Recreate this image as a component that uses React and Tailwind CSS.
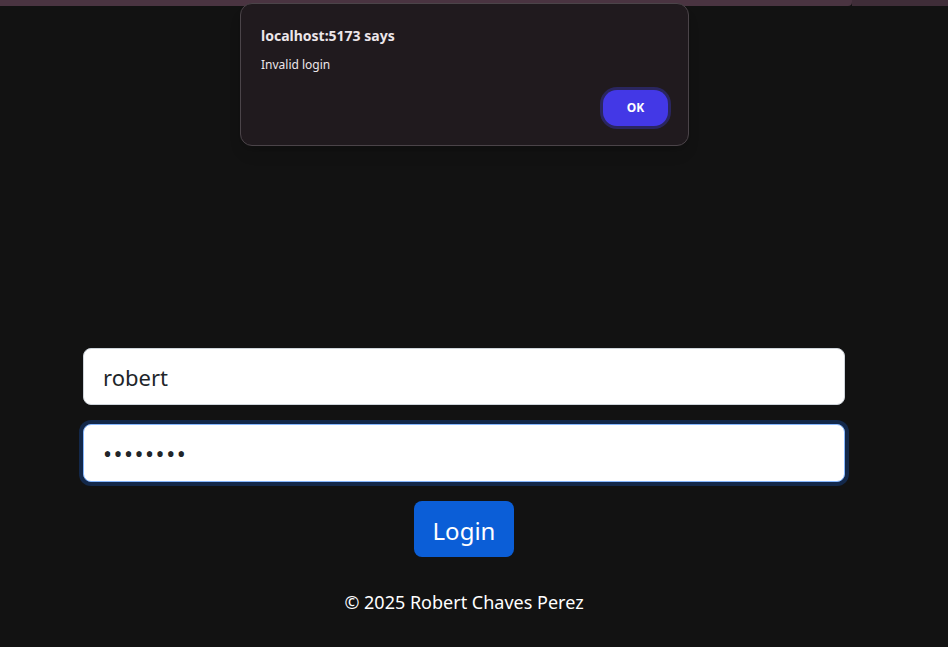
import { useState } from "react";

const App = () => {
  const [user, setUser] = useState("robert");
  const [pass, setPass] = useState("robert12");
  return (
    <div
      className="relative min-h-[647px] w-full bg-[#121212] text-white"
      style={{ fontFamily: '"Noto Sans", "Open Sans", sans-serif' }}
    >
      <div className="flex h-[6px] w-full">
        <div className="h-full w-[852px] rounded-br-sm bg-[#4a3441]" />
        <div className="h-full flex-1 bg-[#3f2d38]" />
      </div>

      <div className="flex flex-col items-center pt-[342px]">
        <div className="flex w-[762px] -translate-x-[10px] flex-col items-center">
          <input
            value={user}
            onChange={(e) => setUser(e.target.value)}
            className="h-[57px] w-full rounded-lg border border-[#ced4da] bg-white px-[19px] text-[22px] text-[#212529] outline-none"
          />
          <input
            type="password"
            value={pass}
            onChange={(e) => setPass(e.target.value)}
            className="mt-[19px] h-[58px] w-full rounded-lg border border-[#86b7fe] bg-white px-[19px] text-[24px] tracking-[1.5px] text-[#212529] outline-none ring-4 ring-[#13284a]"
          />
          <button className="mt-[19px] h-[56px] w-[100px] rounded-lg bg-[#0b5ed7] pt-[3px] text-[24px] text-white">
            Login
          </button>
          <p className="mt-[33px] text-[18px] leading-6">© 2025 Robert Chaves Perez</p>
        </div>
      </div>

      <div className="absolute left-[240px] top-[3px] h-[143px] w-[449px] rounded-xl border border-[#4b4449] bg-[#201a1e] px-[20px] pt-[22px] shadow-lg">
        <div className="text-[14px] font-bold leading-5 text-[#ece6ea]">localhost:5173 says</div>
        <div className="mt-[11px] text-[12px] leading-4 text-[#ece6ea]">Invalid login</div>
        <div className="mt-[17px] flex justify-end">
          <button className="h-[36px] w-[65px] rounded-[14px] bg-[#4338e6] text-[12px] font-bold text-white ring-[3px] ring-[#2a2660]">
            OK
          </button>
        </div>
      </div>
    </div>
  );
};

export default App;
